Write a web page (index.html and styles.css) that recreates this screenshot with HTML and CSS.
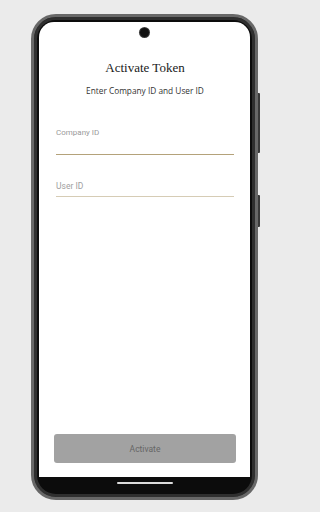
FILE: index.html
```html
<!DOCTYPE html>
<html lang="en">
<head>
<meta charset="utf-8">
<title>Activate Token</title>
<link rel="stylesheet" href="styles.css">
</head>
<body>
<div class="stage">
  <div class="phone">
    <span class="side-btn side-btn-power"></span>
    <span class="side-btn side-btn-vol"></span>
    <div class="screen">
      <span class="camera"></span>
      <h1 class="title">Activate Token</h1>
      <p class="subtitle">Enter Company ID and User ID</p>
      <div class="field field-active">
        <label class="field-label">Company ID</label>
        <div class="field-input"></div>
      </div>
      <div class="field field-idle">
        <div class="field-input"><span class="placeholder">User ID</span></div>
      </div>
      <button class="activate-btn" type="button">Activate</button>
    </div>
    <div class="navbar"><span class="home-indicator"></span></div>
  </div>
</div>
</body>
</html>
```

FILE: styles.css
```css
* { box-sizing: border-box; }
html, body { margin: 0; padding: 0; }
body {
  background: #ebebeb;
  width: 288px;
  height: 512px;
  overflow: hidden;
  font-family: "Open Sans", "Liberation Sans", sans-serif;
}
.stage {
  padding: 14px 0 0 31px;
}
.phone {
  position: relative;
  width: 227px;
  height: 486px;
  border: 3px solid #686868;
  border-radius: 25px;
  background: #0c0c0c;
  box-shadow: inset 0 0 0 3px #2f2f2f;
  padding: 5px 5px 0 5px;
  display: flex;
  flex-direction: column;
}
.side-btn {
  position: absolute;
  right: -5px;
  width: 2px;
  background: #3a3a3a;
  border-radius: 0 1px 1px 0;
}
.side-btn-power { top: 76px; height: 60px; }
.side-btn-vol { top: 178px; height: 32px; }
.screen {
  position: relative;
  background: #ffffff;
  height: 455px;
  border-radius: 15px 15px 0 0;
  display: flex;
  flex-direction: column;
  padding: 0 16px 14px 17px;
}
.camera {
  position: absolute;
  left: 101px;
  top: 6px;
  width: 9px;
  height: 9px;
  border-radius: 50%;
  background: #111;
  box-shadow: 0 0 0 1px #3a3a3a;
}
.title {
  margin: 38px 0 0;
  font-family: "Liberation Serif", "DejaVu Serif", serif;
  font-weight: normal;
  font-size: 13px;
  line-height: 16px;
  text-align: center;
  color: #1a1a1a;
}
.subtitle {
  margin: 9px 0 0;
  font-size: 8.3px;
  line-height: 12px;
  text-align: center;
  color: #333333;
}
.field { display: flex; flex-direction: column; }
.field-active { margin-top: 30px; }
.field-idle { margin-top: 25px; }
.field-label {
  font-family: Roboto, "Liberation Sans", sans-serif;
  font-size: 8px;
  line-height: 12px;
  color: #9a9a9a;
}
.field-active .field-input {
  height: 16px;
  border-bottom: 1px solid #b4a27a;
}
.field-idle .field-input {
  height: 17px;
  border-bottom: 1px solid #d6ccb5;
}
.placeholder {
  display: block;
  font-family: Roboto, "Liberation Sans", sans-serif;
  font-size: 8.5px;
  line-height: 12px;
  color: #a0a0a0;
}
.activate-btn {
  margin-top: auto;
  margin-left: -2px;
  margin-right: -2px;
  height: 29px;
  border: none;
  border-radius: 3px;
  background: #a2a2a2;
  color: #666666;
  font-family: Roboto, "Liberation Sans", sans-serif;
  font-size: 8.5px;
}
.navbar {
  height: 20px;
  display: flex;
  justify-content: center;
  align-items: flex-start;
  padding-top: 5px;
}
.home-indicator {
  display: block;
  width: 56px;
  height: 2px;
  border-radius: 1px;
  background: #dcdcdc;
}
```
